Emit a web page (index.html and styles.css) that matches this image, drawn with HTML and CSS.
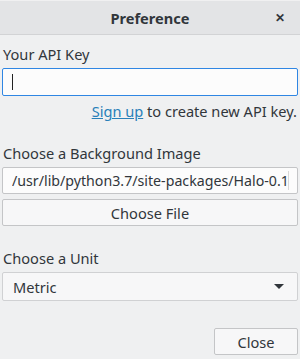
FILE: index.html
```html
<!DOCTYPE html>
<html lang="en">
<head>
    <meta charset="UTF-8">
    <title>Preference</title>
    <link rel="stylesheet" href="styles.css">
</head>
<body>

    <!-- Title bar -->
    <div class="titlebar">
        <span class="title">Preference</span>
        <span class="close-x">&#10005;</span>
    </div>

    <!-- Dialog content -->
    <div class="content">
        <div class="label first">Your API Key</div>
        <div class="input focused"><span class="caret"></span></div>
        <div class="hint"><a href="#" class="link">Sign up</a> to create new API key.</div>

        <div class="label">Choose a Background Image</div>
        <div class="input path"><span class="path-text">/usr/lib/python3.7/site-packages/Halo-0.1</span></div>
        <button class="button wide">Choose File</button>

        <div class="label">Choose a Unit</div>
        <div class="select">
            <span>Metric</span>
            <span class="arrow"></span>
        </div>

        <div class="footer">
            <button class="button close-btn">Close</button>
        </div>
    </div>

</body>
</html>
```

FILE: styles.css
```css
/* General reset */
* {
    margin: 0;
    padding: 0;
    box-sizing: border-box;
}

:root {
    --bg: #eff0f1;
    --titlebar: #e3e4e6;
    --text: #31363b;
    --field: #fcfcfc;
    --border: #c4c5c7;
    --focus: #2f86e3;
    --link: #2980b9;
}

body {
    width: 300px;
    height: 359px;
    font-family: "Noto Sans", sans-serif;
    font-size: 14.6px;
    color: var(--text);
    background-color: var(--bg);
    overflow: hidden;
}

/* Title bar */
.titlebar {
    height: 35px;
    display: flex;
    align-items: center;
    justify-content: center;
    position: relative;
    background-color: var(--titlebar);
    border-top: 1px solid #f0f0f1;
    border-bottom: 1px solid #d2d3d5;
}

.title {
    font-weight: bold;
}

.close-x {
    position: absolute;
    right: 15px;
    top: 8px;
    font-size: 12px;
    font-weight: bold;
}

/* Content */
.content {
    padding: 0 2px;
}

.label {
    height: 20px;
    line-height: 20px;
    padding-left: 1px;
    margin-top: 22px;
    margin-bottom: 4px;
}

.label.first {
    margin-top: 9px;
}

.input {
    height: 28px;
    display: flex;
    align-items: center;
    background-color: var(--field);
    border: 1px solid var(--border);
    border-radius: 2px;
    padding: 0 9px;
    white-space: nowrap;
    overflow: hidden;
}

.input.focused {
    border-color: var(--focus);
}

.caret {
    width: 1px;
    height: 16px;
    background-color: #222;
}

.input.path {
    height: 27px;
    padding: 0 8px 0 9px;
}

.path-text {
    flex: 1;
    overflow: hidden;
    font-size: 14.2px;
    border-right: 1px solid #d8d8d8;
}

.hint {
    text-align: right;
    padding-right: 1px;
    margin-top: 5px;
    line-height: 20px;
}

.link {
    color: var(--link);
}

.button {
    font-family: "Noto Sans", sans-serif;
    font-size: 14.6px;
    color: var(--text);
    height: 27px;
    background-color: #f7f7f8;
    border: 1px solid var(--border);
    border-radius: 2px;
}

.button.wide {
    display: block;
    width: 100%;
    margin-top: 5px;
}

.select {
    height: 29px;
    display: flex;
    align-items: center;
    justify-content: space-between;
    background-color: #f7f7f8;
    border: 1px solid #d0d1d3;
    border-radius: 2px;
    padding: 0 13px 0 10px;
    margin-top: 1px;
}

.arrow {
    width: 0;
    height: 0;
    border-left: 5px solid transparent;
    border-right: 5px solid transparent;
    border-top: 5px solid var(--text);
}

.footer {
    display: flex;
    justify-content: flex-end;
    margin-top: 27px;
}

.close-btn {
    width: 84px;
}
```
